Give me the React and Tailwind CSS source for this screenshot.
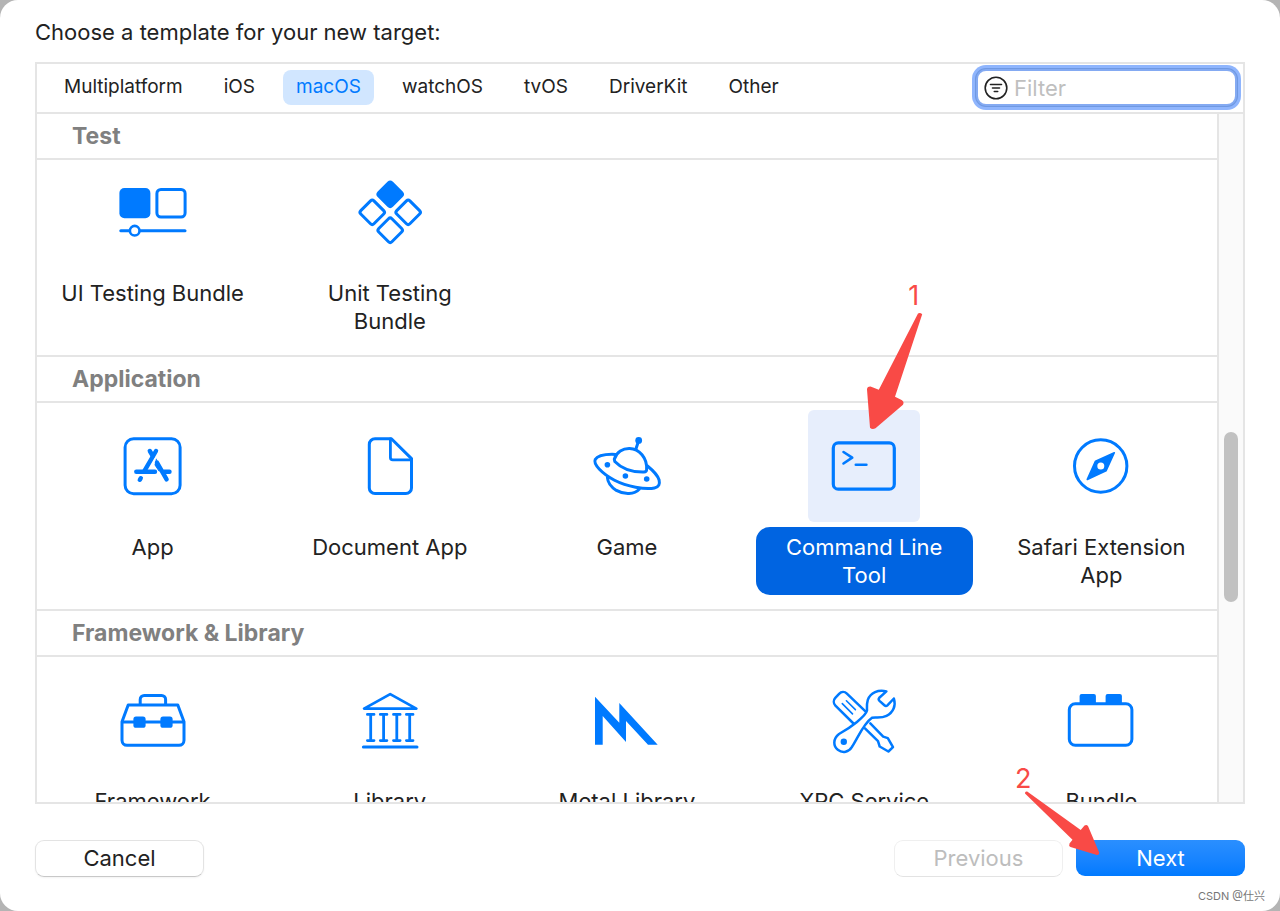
import { useState } from "react";

const PLATFORMS = ["Multiplatform", "iOS", "macOS", "watchOS", "tvOS", "DriverKit", "Other"];

function Icon({ children }) {
  return (
    <svg
      viewBox="0 0 112 112"
      className="size-28 text-[#007aff]"
      fill="none"
      stroke="currentColor"
      strokeWidth="3"
      strokeLinecap="round"
      strokeLinejoin="round"
      aria-hidden="true"
    >
      {children}
    </svg>
  );
}

function UITestIcon() {
  return (
    <Icon>
      <rect x="22.4" y="32" width="31" height="30.3" rx="5" fill="currentColor" stroke="none" />
      <rect x="59.9" y="33.4" width="28.2" height="27.6" rx="4" />
      <path d="M23.8 74.7H88" />
      <circle cx="37.7" cy="74.7" r="4.8" fill="#fff" strokeWidth="2.6" />
    </Icon>
  );
}

function UnitTestIcon() {
  return (
    <Icon>
      <g transform="translate(56.2 56.3) rotate(45)">
        <rect x="-22" y="-22" width="18.6" height="18.6" rx="2.4" fill="currentColor" />
        <rect x="3.4" y="-22" width="18.6" height="18.6" rx="2.4" />
        <rect x="-22" y="3.4" width="18.6" height="18.6" rx="2.4" />
        <rect x="3.4" y="3.4" width="18.6" height="18.6" rx="2.4" />
      </g>
    </Icon>
  );
}

function AppIcon() {
  return (
    <Icon>
      <rect x="28.1" y="28.7" width="55" height="55" rx="8.5" />
      <g strokeWidth="4.4">
        <path d="M59 41 47.6 60.6" />
        <path d="M52.8 41l3 5" />
        <path d="M39.3 61.7H58" />
        <path d="M67 61.7h5.5" />
        <path d="M60 52.6 69.6 69.4" />
        <path d="M43.8 68.2l-1 1.6" />
      </g>
      <path d="M59.4 49.2 58 55l4 6" fill="currentColor" strokeWidth="1" />
    </Icon>
  );
}

function DocumentIcon() {
  return (
    <Icon>
      <path d="M57.4 28.7H41a5.7 5.7 0 0 0-5.7 5.7v43.5a5.7 5.7 0 0 0 5.7 5.7h30.8a5.7 5.7 0 0 0 5.7-5.7V48.6Z" />
      <path d="M56.4 29v18.5a2.4 2.4 0 0 0 2.4 2.4H77" strokeWidth="2.8" />
    </Icon>
  );
}

function GameIcon() {
  return (
    <Icon>
      <circle cx="67.7" cy="30.4" r="3.4" fill="currentColor" stroke="none" />
      <path d="M67.4 31.5 64.9 39" />
      <path d="M43.3 49.2C45.5 42 52 38.3 58.6 38.5c9.4.2 18 9.5 17 21.5-.2 1.600-1.200 1.900-2.600 2C60 62.300 49.500 57.500 43.800 51.500Z" />
      <path d="M44.5 44.4C35 44 26.5 45.5 24.2 49.6c-2.200 4.700 7 14 19.300 20.600C56 76.6 74 79.8 83.5 78c4.500-.9 5.500-4 4.600-8C86.800 65.5 82 60.5 76.5 56" />
      <path d="M36.4 67.5c.3 4.5 3.6 9.5 9 12.9 8 4.500 18 4.200 23-1.500" />
      <g fill="currentColor" stroke="none">
        <circle cx="36.4" cy="54.7" r="2.8" />
        <circle cx="54.4" cy="66" r="2.8" />
        <circle cx="75.7" cy="69" r="2.8" />
      </g>
    </Icon>
  );
}

function TerminalIcon() {
  return (
    <Icon>
      <rect x="25.3" y="32.9" width="61" height="46.3" rx="5" strokeWidth="3.2" />
      <path d="M35.5 42 44.2 47.7 35.5 53.5" strokeWidth="2.6" />
      <path d="M47.8 54.7h10.6" strokeWidth="2.6" />
    </Icon>
  );
}

function SafariIcon() {
  return (
    <Icon>
      <circle cx="55.7" cy="56" r="26.2" />
      <path
        d="M69.3 42.7 50.5 51.2 42.3 69.4 61 60.8Z"
        fill="currentColor"
        strokeWidth="1.6"
      />
      <circle cx="55.8" cy="56" r="3.5" fill="#fff" stroke="none" />
    </Icon>
  );
}

function FrameworkIcon() {
  return (
    <Icon>
      <path d="M25 57.8 31.2 40.9H80.800L87 57.8v18.5a5 5 0 0 1-5 5H30a5 5 0 0 1-5-5Z" />
      <path d="M25.5 58H86.5" />
      <path d="M43.2 40.5v-5a4 4 0 0 1 4-4h17.4a4 4 0 0 1 4 4v5" />
      <rect x="36.4" y="52.6" width="12.2" height="11.2" rx="2.6" fill="currentColor" stroke="none" />
      <rect x="63.4" y="52.6" width="12.2" height="11.2" rx="2.6" fill="currentColor" stroke="none" />
    </Icon>
  );
}

function LibraryIcon() {
  return (
    <Icon>
      <path d="M56.2 30.1 82.3 44.6H30.1Z" strokeWidth="2.8" />
      {[36.7, 49.6, 62.8, 75.7].map((x) => (
        <path key={x} d={`M${x - 3.3} 50.4h6.6M${x - 3.3} 76.6h6.6M${x} 50.4V76.6`} strokeWidth="2.8" />
      ))}
      <path d="M29.4 83H83" />
    </Icon>
  );
}

function MetalIcon() {
  return (
    <Icon>
      <path
        d="M24 32.7 48.3 58.7V39L86.7 80.7H77L55 57V78L31.7 52V80.7H24Z"
        fill="currentColor"
        stroke="none"
      />
    </Icon>
  );
}

function XPCIcon() {
  return (
    <Icon>
      <g strokeWidth="2.5">
        <path d="M58.5 48.3 38.9 29.600a5.600 5.600 0 0 0-7.800.2l-3.800 4.100a5.600 5.600 0 0 0 .1 7.700L46 60" />
        <path d="M38.400 36.800l9 8.800M34.300 39.600l10.200 10.300" strokeWidth="1.600" />
        <path d="M62.300 59.300 75.200 72.600l4.600 1.500 5.200 9-4.600 4.400-8.700-5-1.700-5.300L57 64.400" />
        <path d="M78.400 27.400c-8-2.200-16 1.200-18.600 8.400-1.400 4.500-.8 8.800-.8 10.800-1.200 5.500-16.200 16.900-28 23.400-6.500 5-5.600 12.400-1.200 15.800 5 3.800 11 2.300 14.200-3C49.500 74.500 55.500 59.500 64 53.800c3.500-.9 9 .9 14.500-1.900 7-3.500 9.500-10.400 7.400-17.400l-6.500 6.800c-1 1-2 .9-3 0l-4.900-4.500c-1.100-1.100-1.100-2-.2-3.100Z" fill="#fff" />
      </g>
      <circle cx="35.800" cy="77.700" r="3.200" fill="currentColor" stroke="none" />
    </Icon>
  );
}

function BundleIcon() {
  return (
    <Icon>
      <rect x="24.3" y="39.7" width="62.6" height="41.6" rx="6" />
      <path
        d="M34.6 40v-8a2 2 0 0 1 2-2h12.3a2 2 0 0 1 2 2v8ZM60.6 40v-8a2 2 0 0 1 2-2h12.3a2 2 0 0 1 2 2v8Z"
        fill="currentColor"
        stroke="none"
      />
    </Icon>
  );
}

const SECTIONS = [
  {
    title: "Test",
    items: [
      { name: "UI Testing Bundle", icon: UITestIcon },
      { name: "Unit Testing Bundle", icon: UnitTestIcon },
    ],
  },
  {
    title: "Application",
    items: [
      { name: "App", icon: AppIcon },
      { name: "Document App", icon: DocumentIcon },
      { name: "Game", icon: GameIcon },
      { name: "Command Line Tool", icon: TerminalIcon, step: true },
      { name: "Safari Extension App", icon: SafariIcon },
    ],
  },
  {
    title: "Framework & Library",
    items: [
      { name: "Framework", icon: FrameworkIcon },
      { name: "Library", icon: LibraryIcon },
      { name: "Metal Library", icon: MetalIcon },
      { name: "XPC Service", icon: XPCIcon },
      { name: "Bundle", icon: BundleIcon },
    ],
  },
];

// step 1: points down at the selected template
function StepOne() {
  return (
    <div className="pointer-events-none absolute -top-[130px] left-[50px] z-20 text-[#f94a46]">
      <svg viewBox="50 -130 70 152" className="h-[152px] w-[70px]" fill="currentColor" aria-hidden="true">
        <path d="M110 -96.5q2-1.500 4.200.7L87 -13.300l6.600 3.400q3 2 1.400 4.600L67.500 18.300q-3.200 1.800-5.500-.5L59 -20.500q0-3 3.500-2.900l8.300 3.200Z" />
      </svg>
      <span className="absolute top-0 left-[50px] text-[27px] leading-8">1</span>
    </div>
  );
}

// step 2: points at the Next button
function StepTwo() {
  return (
    <div className="pointer-events-none absolute -top-[79px] -left-16 z-20 text-[#f94a46]">
      <svg viewBox="-65 -80 90 100" className="h-[100px] w-[90px]" fill="currentColor" aria-hidden="true">
        <path d="M-52 -47.500q-.2-2.500 2.200-2L3.700 -11l3.800-4.500q2.300-1.300 3.600.8L22.300 11.800q-.4 2.400-2.400 2.200L-6.500 6q-2-1.400-1-3.600l3-3.600Z" />
      </svg>
      <span className="absolute top-0.5 left-[3px] text-[27px] leading-8">2</span>
    </div>
  );
}

function Template({ item, selected, onSelect }) {
  const Glyph = item.icon;
  return (
    <button type="button" onClick={onSelect} aria-pressed={selected} className="flex flex-col items-center gap-[5px]">
      <span className={selected ? "relative rounded-md bg-[#e7eefc]" : "relative"}>
        <Glyph />
        {item.step && <StepOne />}
      </span>
      <span
        className={
          selected
            ? "w-full rounded-[14px] bg-[#0064e1] px-5 py-1.5 text-[22px] leading-7 text-white"
            : "w-full px-4 py-1.5 text-[22px] leading-7"
        }
      >
        {item.name}
      </span>
    </button>
  );
}

export default function App() {
  const [platform, setPlatform] = useState("macOS");
  const [template, setTemplate] = useState("Command Line Tool");
  const [filter, setFilter] = useState("");

  return (
    <div className="h-screen bg-[#b4b4b4] font-['Inter','Noto_Sans_CJK_SC',sans-serif] text-[#222]">
      <div className="relative flex h-full flex-col rounded-[18px] bg-white px-[35px] pt-4 pb-[34px]">
        <h1 className="text-[22px] leading-8">Choose a template for your new target:</h1>

        <div className="mt-3.5 flex min-h-0 flex-1 flex-col border-2 border-[#e5e5e5]">
          <div className="flex shrink-0 items-center justify-between border-b-2 border-[#e5e5e5] pt-[5px] pr-1.5 pb-1.5 pl-3.5">
            <nav className="flex gap-[15px]">
              {PLATFORMS.map((p) => (
                <button
                  key={p}
                  type="button"
                  onClick={() => setPlatform(p)}
                  className={
                    p === platform
                      ? "h-[35px] rounded-lg bg-[#d1e6ff] px-[13px] text-[19px] text-[#007aff]"
                      : "h-[35px] rounded-lg px-[13px] text-[19px]"
                  }
                >
                  {p}
                </button>
              ))}
            </nav>
            <label className="flex h-[37px] w-[261px] items-center gap-1.5 rounded-[10px] border-2 border-[#84aaf2] bg-white px-1.5 shadow-[0_0_0_1px_#6f99e2,0_0_0_4px_#8fb5fd]">
              <svg viewBox="0 0 24 24" className="size-6 shrink-0" fill="none" stroke="#222" strokeWidth="1.6" strokeLinecap="round" aria-hidden="true">
                <circle cx="12" cy="12" r="10.8" />
                <path d="M6.5 8.500h11M8.500 12h7M10.300 15.500h3.400" />
              </svg>
              <input
                type="text"
                aria-label="Filter"
                placeholder="Filter"
                value={filter}
                onChange={(e) => setFilter(e.target.value)}
                className="w-full min-w-0 text-[22px] leading-7 outline-none placeholder:text-[#bfbfbf]"
              />
            </label>
          </div>

          <div className="flex min-h-0 flex-1">
            <div className="min-w-0 flex-1 overflow-hidden">
              {SECTIONS.map((s, i) => (
                <section key={s.title}>
                  <h2
                    className={
                      i === 0
                        ? "border-b-2 border-[#e5e5e5] pl-[35px] text-[23px] leading-[44px] font-bold text-[#808080]"
                        : "border-y-2 border-[#e5e5e5] pl-[35px] text-[23px] leading-[44px] font-bold text-[#808080]"
                    }
                  >
                    {s.title}
                  </h2>
                  {/* first row is scrolled slightly under its header */}
                  <div
                    className={
                      i === 0
                        ? "-mt-1 grid grid-cols-5 items-start gap-5 px-[7px] pb-3.5"
                        : "grid grid-cols-5 items-start gap-5 px-[7px] pt-[7px] pb-3.5"
                    }
                  >
                    {s.items.map((t) => (
                      <Template
                        key={t.name}
                        item={t}
                        selected={t.name === template}
                        onSelect={() => setTemplate(t.name)}
                      />
                    ))}
                  </div>
                </section>
              ))}
            </div>
            <div className="w-[26px] border-l-2 border-[#e5e5e5] bg-[#fafafa] pt-[318px] pl-[5px]">
              <div className="h-[170px] w-3.5 rounded-full bg-[#c1c1c1]" />
            </div>
          </div>
        </div>

        <div className="mt-9 flex justify-between text-[22px]">
          <button type="button" className="h-[37px] w-[169px] rounded-[9px] border border-[#e3e3e3] border-b-[#c8c8c8] bg-white shadow-xs">
            Cancel
          </button>
          <div className="flex gap-[13px]">
            <button type="button" disabled className="h-[37px] w-[169px] rounded-[9px] border border-[#efefef] border-b-[#e3e3e3] bg-white text-[#bdbdbd]">
              Previous
            </button>
            <div className="relative">
              <button type="button" className="h-9 w-[169px] rounded-[9px] bg-linear-to-b from-[#2a8fff] to-[#007aff] text-white">
                Next
              </button>
              <StepTwo />
            </div>
          </div>
        </div>

        <span className="absolute right-[15px] bottom-1.5 text-[11px] leading-[18px] text-[#777]">CSDN @仕兴</span>
      </div>
    </div>
  );
}
